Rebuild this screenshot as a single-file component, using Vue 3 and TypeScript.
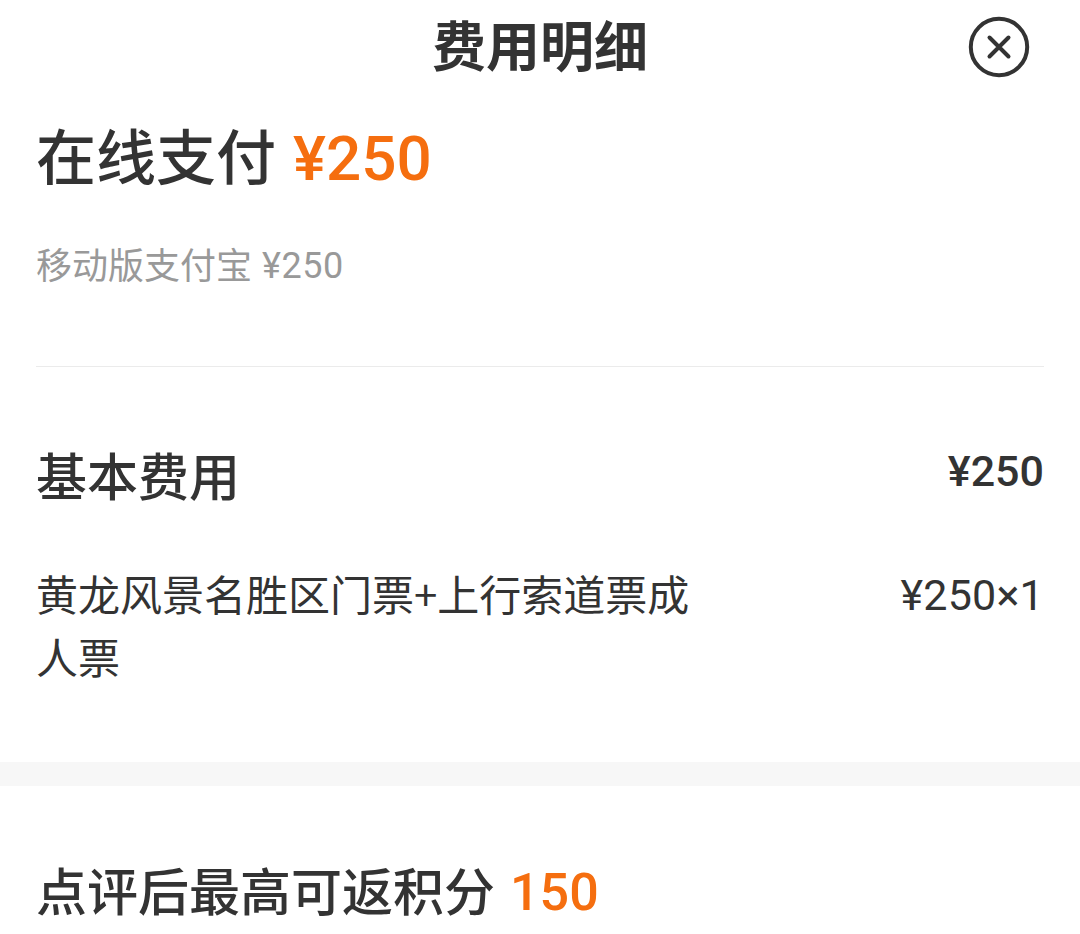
<template>
  <main class="fee-detail">
    <header class="header">
      <h1 class="title">费用明细</h1>
      <button class="close" type="button" aria-label="关闭">
        <svg width="62" height="62" viewBox="0 0 62 62" fill="none" stroke="#333" stroke-width="4">
          <circle cx="31" cy="31" r="28.2" />
          <path d="M21.5 21.5 40.5 40.5M40.5 21.5 21.5 40.5" stroke-linecap="round" />
        </svg>
      </button>
    </header>

    <section class="payment">
      <h2 class="pay-title">
        <span class="pay-label">在线支付</span>
        <span class="pay-amount">{{ price(total) }}</span>
      </h2>
      <p class="pay-method">
        <span class="method-name">移动版支付宝</span>
        <span class="method-amount">{{ price(total) }}</span>
      </p>
    </section>

    <section class="basic">
      <div class="row basic-row">
        <h3 class="basic-title">基本费用</h3>
        <span class="basic-amount">{{ price(total) }}</span>
      </div>
      <div v-for="item in items" :key="item.name" class="row item-row">
        <span class="item-name">{{ item.name }}</span>
        <span class="item-amount">{{ price(item.price) }}×{{ item.count }}</span>
      </div>
    </section>

    <section class="points">
      <span class="points-label">点评后最高可返积分</span>
      <span class="points-value">{{ points }}</span>
    </section>
  </main>
</template>

<script setup lang="ts">
import { computed, ref } from 'vue';

interface FeeItem {
  name: string;
  price: number;
  count: number;
}

const items = ref<FeeItem[]>([
  { name: '黄龙风景名胜区门票+上行索道票成人票', price: 250, count: 1 },
]);
const points = ref(150);

const total = computed(() => items.value.reduce((sum, item) => sum + item.price * item.count, 0));

function price(value: number): string {
  return `¥${value}`;
}
</script>

<style>
body {
  margin: 0;
  background: #fff;
}
</style>

<style scoped>
.fee-detail {
  width: 1080px;
  height: 934px;
  overflow: hidden;
  background: #fff;
  color: #333;
  font-family: 'Noto Sans CJK SC', sans-serif;
}
h1,
h2,
h3,
p {
  margin: 0;
}
.header {
  display: grid;
  grid-template-columns: 1fr auto 1fr;
  align-items: center;
  height: 94px;
  padding: 0 50px;
}
.title {
  grid-column: 2;
  padding-bottom: 6px;
  font-size: 54px;
  line-height: 88px;
  font-weight: 700;
}
.close {
  justify-self: end;
  width: 62px;
  height: 62px;
  padding: 0;
  border: none;
  background: none;
}
.close svg {
  display: block;
}
.payment {
  height: 272px;
  margin: 0 36px;
  border-bottom: 1px solid #ebebeb;
}
.pay-title {
  display: flex;
  gap: 17px;
  padding-top: 20px;
  font-size: 60px;
  line-height: 80px;
  font-weight: 500;
}
.pay-amount,
.method-amount,
.basic-amount,
.item-amount,
.points-value {
  font-family: Roboto, 'Noto Sans CJK SC', sans-serif;
}
.pay-amount,
.points-value {
  color: #f56e0f;
}
.pay-amount {
  padding-top: 5px;
  font-size: 62px;
}
.pay-method {
  display: flex;
  gap: 10px;
  padding-top: 39px;
  color: #999;
  font-size: 36px;
  line-height: 50px;
}
.method-amount {
  padding-top: 3px;
  letter-spacing: 0.5px;
}
.row {
  display: flex;
  justify-content: space-between;
}
.basic {
  height: 395px;
  padding: 0 36px;
}
.basic-row {
  height: 70px;
  padding-top: 72px;
  line-height: 70px;
}
.basic-title {
  font-size: 51px;
  font-weight: 500;
}
.basic-amount {
  font-size: 43px;
  line-height: 64px;
  font-weight: 500;
}
.item-row {
  padding-top: 52px;
  font-size: 42px;
  line-height: 63px;
}
.item-name {
  width: 660px;
}
.item-amount {
  padding-top: 3px;
  font-size: 43px;
  letter-spacing: 0.2px;
}
.points {
  display: flex;
  gap: 15px;
  height: 148px;
  padding: 68px 36px 0;
  border-top: 24px solid #f7f7f7;
  box-sizing: border-box;
  font-size: 51px;
  line-height: 70px;
  font-weight: 500;
}
.points-value {
  padding-top: 4px;
  font-size: 52px;
}
</style>
